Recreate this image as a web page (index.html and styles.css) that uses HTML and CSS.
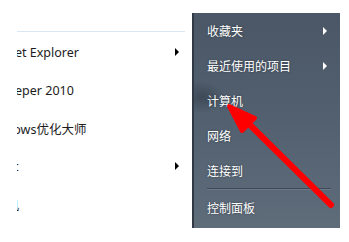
FILE: index.html
```html
<!DOCTYPE html>
<html lang="zh-CN">
<head>
<meta charset="utf-8">
<title>开始菜单</title>
<link rel="stylesheet" href="styles.css">
</head>
<body>
<div class="menu">
  <div class="programs">
    <div class="sep-light"></div>
    <div class="prog">
      <span class="label"><span class="cut cut-ie">Internet Explorer</span></span>
      <span class="tri-dark"></span>
    </div>
    <div class="prog">
      <span class="label"><span class="cut">Diskeeper 2010</span></span>
    </div>
    <div class="prog">
      <span class="label"><span class="cut">Windows优化大师</span></span>
    </div>
    <div class="prog">
      <span class="label"><span class="cut cut-short">Magic</span></span>
      <span class="tri-dark"></span>
    </div>
    <div class="prog">
      <span class="label"><span class="cut cut-cjk">计算机</span></span>
    </div>
  </div>
  <div class="places">
    <div class="place"><span>收藏夹</span><span class="tri-light"></span></div>
    <div class="place"><span>最近使用的项目</span><span class="tri-light"></span></div>
    <div class="place"><span>计算机</span></div>
    <div class="place"><span>网络</span></div>
    <div class="place"><span>连接到</span></div>
    <div class="sep-dark"></div>
    <div class="place"><span>控制面板</span></div>
  </div>
</div>
<svg class="annot" width="349" height="242" viewBox="0 0 349 242">
  <line x1="248" y1="123" x2="331" y2="205" stroke="#ff0000" stroke-width="6" stroke-linecap="round"/>
  <polygon points="229,106 242,131 255,118" fill="#ff0000" stroke="#ff0000" stroke-width="4" stroke-linejoin="round"/>
</svg>
</body>
</html>
```

FILE: styles.css
```css
html, body {
  margin: 0;
  padding: 0;
}
body {
  width: 349px;
  height: 242px;
  background: #ffffff;
  font-family: "Noto Sans", "Noto Sans CJK SC", sans-serif;
  overflow: hidden;
  position: relative;
}
.menu {
  display: flex;
  align-items: flex-start;
}
.programs {
  width: 192px;
  box-sizing: border-box;
  padding: 31px 7px 0 17px;
  display: flex;
  flex-direction: column;
}
.sep-light {
  height: 1px;
  background: #d9e6f4;
  margin-bottom: 1px;
}
.prog {
  height: 38px;
  display: flex;
  align-items: center;
  justify-content: space-between;
  padding-right: 6px;
}
.label {
  overflow: hidden;
  white-space: nowrap;
  font-size: 12.5px;
  color: #1c1c1c;
  flex: 1;
  min-width: 0;
}
.cut {
  display: inline-block;
  margin-left: -34px;
}
.cut-ie {
  margin-left: -38.5px;
}
.cut-short {
  margin-left: -33.5px;
}
.cut-cjk {
  margin-left: -35.5px;
}
.tri-dark {
  width: 0;
  height: 0;
  border-left: 4px solid #000;
  border-top: 4px solid transparent;
  border-bottom: 4px solid transparent;
}
.places {
  width: 148px;
  height: 215px;
  margin-top: 13px;
  box-sizing: border-box;
  border-left: 2px solid #313944;
  padding: 0 9px 3px 13px;
  background:
    radial-gradient(ellipse 22px 16px at 8px 84px, rgba(40, 48, 58, 0.45), rgba(40, 48, 58, 0)),
    linear-gradient(180deg, #4b5766 0%, #526070 50%, #5f6c7a 100%);
  display: flex;
  flex-direction: column;
}
.place {
  height: 35px;
  display: flex;
  align-items: center;
  justify-content: space-between;
  padding-right: 4px;
  color: #ffffff;
  font-size: 12px;
  font-family: "Noto Sans CJK SC", sans-serif;
  text-shadow: 0 0 2px rgba(20, 26, 34, 0.6);
}
.tri-light {
  width: 0;
  height: 0;
  border-left: 4px solid #ffffff;
  border-top: 4px solid transparent;
  border-bottom: 4px solid transparent;
}
.sep-dark {
  height: 1px;
  background: #3e4856;
  border-bottom: 1px solid #6c7886;
}
.annot {
  position: absolute;
  left: 0;
  top: 0;
  pointer-events: none;
}
```
